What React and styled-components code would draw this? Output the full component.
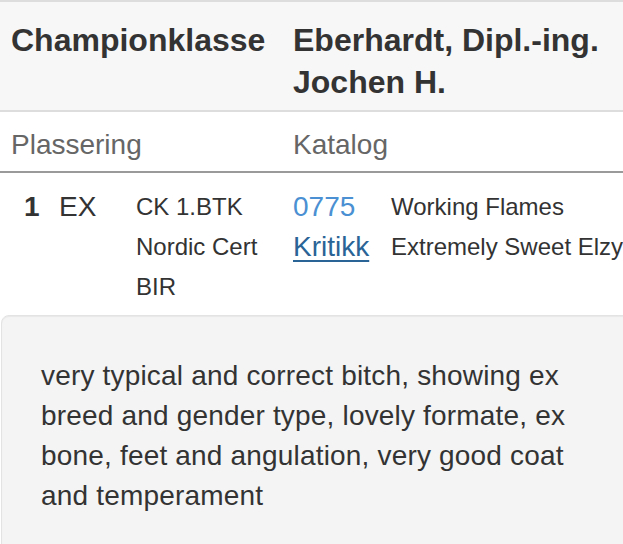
import React from "react";
import styled, { createGlobalStyle } from "styled-components";

const Global = createGlobalStyle`
  html, body { margin: 0; padding: 0; background: #fff; overflow: hidden; }
  body { font-family: "Liberation Sans", Arial, Helvetica, sans-serif; color: #333; }
`;

const Page = styled.div`
  width: 640px;
`;

const Row = styled.div`
  display: grid;
  grid-template-columns: 282px 1fr;
  background: ${(p) => p.$bg || "#fff"};
  border-top: ${(p) => p.$top || "none"};
  border-bottom: ${(p) => p.$bottom || "none"};
  padding: ${(p) => p.$pad || "0"};
`;

const HeadCell = styled.div`
  padding-left: 11px;
  font-size: 32px;
  font-weight: bold;
  line-height: 42px;
  color: #333;
  padding-right: 10px;
`;

const LabelCell = styled.div`
  padding-left: 11px;
  font-size: 28px;
  line-height: 40px;
  color: #666;
`;

const DataCell = styled.div`
  display: flex;
  align-items: flex-start;
  padding-left: ${(p) => p.$left || "11px"};
`;

const Rank = styled.span`
  width: 35px;
  font-size: 28px;
  line-height: 40px;
  font-weight: bold;
  color: #333;
`;

const Grade = styled.span`
  width: 77px;
  font-size: 28px;
  line-height: 40px;
  color: #333;
`;

const SmallStack = styled.div`
  display: flex;
  flex-direction: column;
  font-size: 24px;
  line-height: 40px;
  color: #333;
  white-space: nowrap;
`;

const LinkStack = styled.div`
  width: 98px;
  display: flex;
  flex-direction: column;
  font-size: 28px;
  line-height: 40px;
`;

const Link = styled.a`
  color: ${(p) => (p.$dark ? "#2a6496" : "#4a90d2")};
  text-decoration: ${(p) => (p.$dark ? "underline" : "none")};
  text-decoration-thickness: 2px;
  text-underline-offset: 4px;
`;

const Well = styled.div`
  margin-left: 1px;
  background: #f4f4f4;
  border: 1px solid #e3e3e3;
  border-radius: 8px;
  padding: 40px 39px;
  font-size: 28px;
  line-height: 40px;
  letter-spacing: 0.18px;
  color: #333;
  box-shadow: inset 0 1px 1px rgba(0, 0, 0, 0.05);
`;

export default function App() {
  return (
    <Page>
      <Global />
      <Row $bg="#f7f7f7" $top="2px solid #ddd" $bottom="2px solid #ddd" $pad="17px 0 7px">
        <HeadCell>Championklasse</HeadCell>
        <HeadCell>Eberhardt, Dipl.-ing. Jochen H.</HeadCell>
      </Row>
      <Row $bottom="2px solid #9a9a9a" $pad="13px 0 6px">
        <LabelCell>Plassering</LabelCell>
        <LabelCell>Katalog</LabelCell>
      </Row>
      <Row $pad="14px 0 8px">
        <DataCell $left="24px">
          <Rank>1</Rank>
          <Grade>EX</Grade>
          <SmallStack>
            <span>CK 1.BTK</span>
            <span>Nordic Cert</span>
            <span>BIR</span>
          </SmallStack>
        </DataCell>
        <DataCell>
          <LinkStack>
            <Link href="#">0775</Link>
            <Link href="#" $dark>Kritikk</Link>
          </LinkStack>
          <SmallStack>
            <span>Working Flames</span>
            <span>Extremely Sweet Elzy</span>
          </SmallStack>
        </DataCell>
      </Row>
      <Well>
        very typical and correct bitch, showing ex breed and gender type, lovely formate, ex bone, feet and angulation, very good coat and temperament
      </Well>
    </Page>
  );
}
